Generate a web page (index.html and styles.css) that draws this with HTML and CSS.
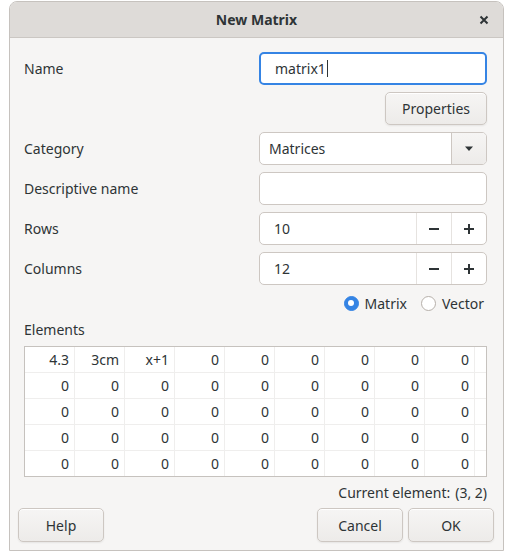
FILE: index.html
```html
<!DOCTYPE html>
<html>
<head>
<meta charset="utf-8">
<link rel="stylesheet" href="styles.css">
</head>
<body>
<div class="window">
  <div class="titlebar">
    <span class="title">New Matrix</span>
    <span class="close"><svg width="10" height="10" viewBox="0 0 10 10"><path d="M1.5 1.5 L8.5 8.5 M8.5 1.5 L1.5 8.5" stroke="#2e3436" stroke-width="2" stroke-linecap="butt"/></svg></span>
  </div>
  <div class="content">
    <div class="form">
      <div class="label">Name</div>
      <div class="entry focused"><span class="text">matrix1</span><span class="cursor"></span></div>
      <div></div>
      <div class="props-cell"><button class="btn props">Properties</button></div>
      <div class="label">Category</div>
      <div class="combo"><span class="combo-text">Matrices</span><span class="combo-btn"><svg width="10" height="6" viewBox="0 0 10 6"><path d="M1 0.5 L9 0.5 L5 5 Z" fill="#2e3436"/></svg></span></div>
      <div class="label">Descriptive name</div>
      <div class="entry"></div>
      <div class="label">Rows</div>
      <div class="spin"><span class="spin-text">10</span><span class="spin-btn"><svg width="12" height="12" viewBox="0 0 12 12"><path d="M1 6 H11" stroke="#2e3436" stroke-width="2"/></svg></span><span class="spin-btn"><svg width="12" height="12" viewBox="0 0 12 12"><path d="M1 6 H11 M6 1 V11" stroke="#2e3436" stroke-width="2"/></svg></span></div>
      <div class="label">Columns</div>
      <div class="spin"><span class="spin-text">12</span><span class="spin-btn"><svg width="12" height="12" viewBox="0 0 12 12"><path d="M1 6 H11" stroke="#2e3436" stroke-width="2"/></svg></span><span class="spin-btn"><svg width="12" height="12" viewBox="0 0 12 12"><path d="M1 6 H11 M6 1 V11" stroke="#2e3436" stroke-width="2"/></svg></span></div>
    </div>
    <div class="radios">
      <label class="radio"><span class="dot checked"></span>Matrix</label>
      <label class="radio"><span class="dot"></span>Vector</label>
    </div>
    <div class="section-label">Elements</div>
    <div class="matrix">
      <div class="mrow"><span class="cell">4.3</span><span class="cell">3cm</span><span class="cell">x+1</span><span class="cell">0</span><span class="cell">0</span><span class="cell">0</span><span class="cell">0</span><span class="cell">0</span><span class="cell">0</span><span class="fill"></span></div>
      <div class="mrow"><span class="cell">0</span><span class="cell">0</span><span class="cell">0</span><span class="cell">0</span><span class="cell">0</span><span class="cell">0</span><span class="cell">0</span><span class="cell">0</span><span class="cell">0</span><span class="fill"></span></div>
      <div class="mrow"><span class="cell">0</span><span class="cell">0</span><span class="cell">0</span><span class="cell">0</span><span class="cell">0</span><span class="cell">0</span><span class="cell">0</span><span class="cell">0</span><span class="cell">0</span><span class="fill"></span></div>
      <div class="mrow"><span class="cell">0</span><span class="cell">0</span><span class="cell">0</span><span class="cell">0</span><span class="cell">0</span><span class="cell">0</span><span class="cell">0</span><span class="cell">0</span><span class="cell">0</span><span class="fill"></span></div>
      <div class="mrow"><span class="cell">0</span><span class="cell">0</span><span class="cell">0</span><span class="cell">0</span><span class="cell">0</span><span class="cell">0</span><span class="cell">0</span><span class="cell">0</span><span class="cell">0</span><span class="fill"></span></div>
    </div>
    <div class="status"><span>Current element:</span><span>(3, 2)</span></div>
  </div>
  <div class="footer">
    <button class="btn fbtn">Help</button>
    <div class="spacer"></div>
    <button class="btn fbtn">Cancel</button>
    <button class="btn fbtn">OK</button>
  </div>
</div>
</body>
</html>
```
FILE: styles.css
```css
* { box-sizing: border-box; }
html, body { margin: 0; padding: 0; background: #ffffff; }
body {
  padding: 1px 0 0 9px;
  font-family: "Noto Sans", sans-serif;
  font-size: 14px;
  color: #2e3436;
}
.window {
  width: 495px;
  height: 550px;
  border: 1px solid #c6c2be;
  border-radius: 8px 8px 0 0;
  background: #f6f5f4;
  display: flex;
  flex-direction: column;
  overflow: hidden;
}
.titlebar {
  height: 36px;
  background: #dedbd8;
  border-bottom: 1px solid #cbc7c3;
  display: flex;
  align-items: center;
  justify-content: center;
  position: relative;
}
.title { font-weight: bold; font-size: 14px; }
.close {
  position: absolute;
  right: 14px;
  top: 13px;
  width: 10px;
  height: 10px;
  display: flex;
}
.content {
  padding: 14px 16px 0 14px;
  display: flex;
  flex-direction: column;
}
.form {
  display: grid;
  grid-template-columns: 1fr 228px;
  grid-auto-rows: 33px;
  row-gap: 7px;
}
.label { display: flex; align-items: center; }
.entry {
  background: #fff;
  border: 1px solid #cdc7c2;
  border-radius: 5px;
  display: flex;
  align-items: center;
  padding-left: 15px;
}
.entry.focused {
  border: 2px solid #3584e4;
  padding-left: 14px;
}
.cursor {
  display: inline-block;
  width: 1px;
  height: 17px;
  background: #2e3436;
  margin-left: 1px;
}
.props-cell { display: flex; justify-content: flex-end; }
.btn {
  font-family: "Noto Sans", sans-serif;
  font-size: 14px;
  color: #2e3436;
  background: linear-gradient(#f6f5f4, #edebe9);
  border: 1px solid #cdc7c2;
  border-radius: 5px;
  box-shadow: inset 0 1px #ffffff, 0 1px 2px rgba(0,0,0,0.07);
  padding: 0;
  margin: 0;
}
.props { width: 102px; height: 33px; }
.combo {
  background: #fff;
  border: 1px solid #cdc7c2;
  border-radius: 5px;
  display: flex;
  overflow: hidden;
}
.combo-text { flex: 1; display: flex; align-items: center; padding-left: 9px; }
.combo-btn {
  width: 35px;
  background: linear-gradient(#f6f5f4, #edebe9);
  border-left: 1px solid #cdc7c2;
  display: flex;
  align-items: center;
  justify-content: center;
}
.spin {
  background: #fff;
  border: 1px solid #cdc7c2;
  border-radius: 5px;
  display: flex;
}
.spin-text { flex: 1; display: flex; align-items: center; padding-left: 14px; }
.spin-btn {
  width: 35px;
  border-left: 1px solid #e6e3e0;
  display: flex;
  align-items: center;
  justify-content: center;
}
.radios {
  margin-top: 7px;
  height: 22px;
  display: flex;
  justify-content: flex-end;
  align-items: center;
  gap: 14px;
  padding-right: 3px;
}
.radio { display: flex; align-items: center; gap: 6px; }
.dot {
  width: 15px;
  height: 15px;
  border-radius: 50%;
  border: 1px solid #b6b0aa;
  background: #fff;
  display: inline-block;
  position: relative;
}
.dot.checked {
  background: #3584e4;
  border-color: #3584e4;
}
.dot.checked::after {
  content: "";
  position: absolute;
  left: 3.5px;
  top: 3.5px;
  width: 6px;
  height: 6px;
  border-radius: 50%;
  background: #fff;
}
.section-label {
  margin-top: 6px;
  height: 20px;
  line-height: 20px;
}
.matrix {
  margin-top: 6px;
  background: #fff;
  border: 1px solid #c6c2be;
  display: flex;
  flex-direction: column;
}
.mrow {
  display: flex;
  height: 26px;
  border-bottom: 1px solid #efeeed;
}
.mrow:last-child { border-bottom: none; height: 25px; }
.cell {
  width: 50px;
  border-right: 1px solid #efeeed;
  text-align: right;
  padding-right: 5px;
  line-height: 25px;
}
.fill { flex: 1; }
.status {
  margin-top: 5px;
  height: 20px;
  display: flex;
  justify-content: flex-end;
  align-items: center;
  gap: 5px;
}
.footer {
  margin-top: auto;
  padding: 0 9px 8px 8px;
  display: flex;
  gap: 5px;
}
.spacer { flex: 1; }
.fbtn { width: 86px; height: 34px; }
```
